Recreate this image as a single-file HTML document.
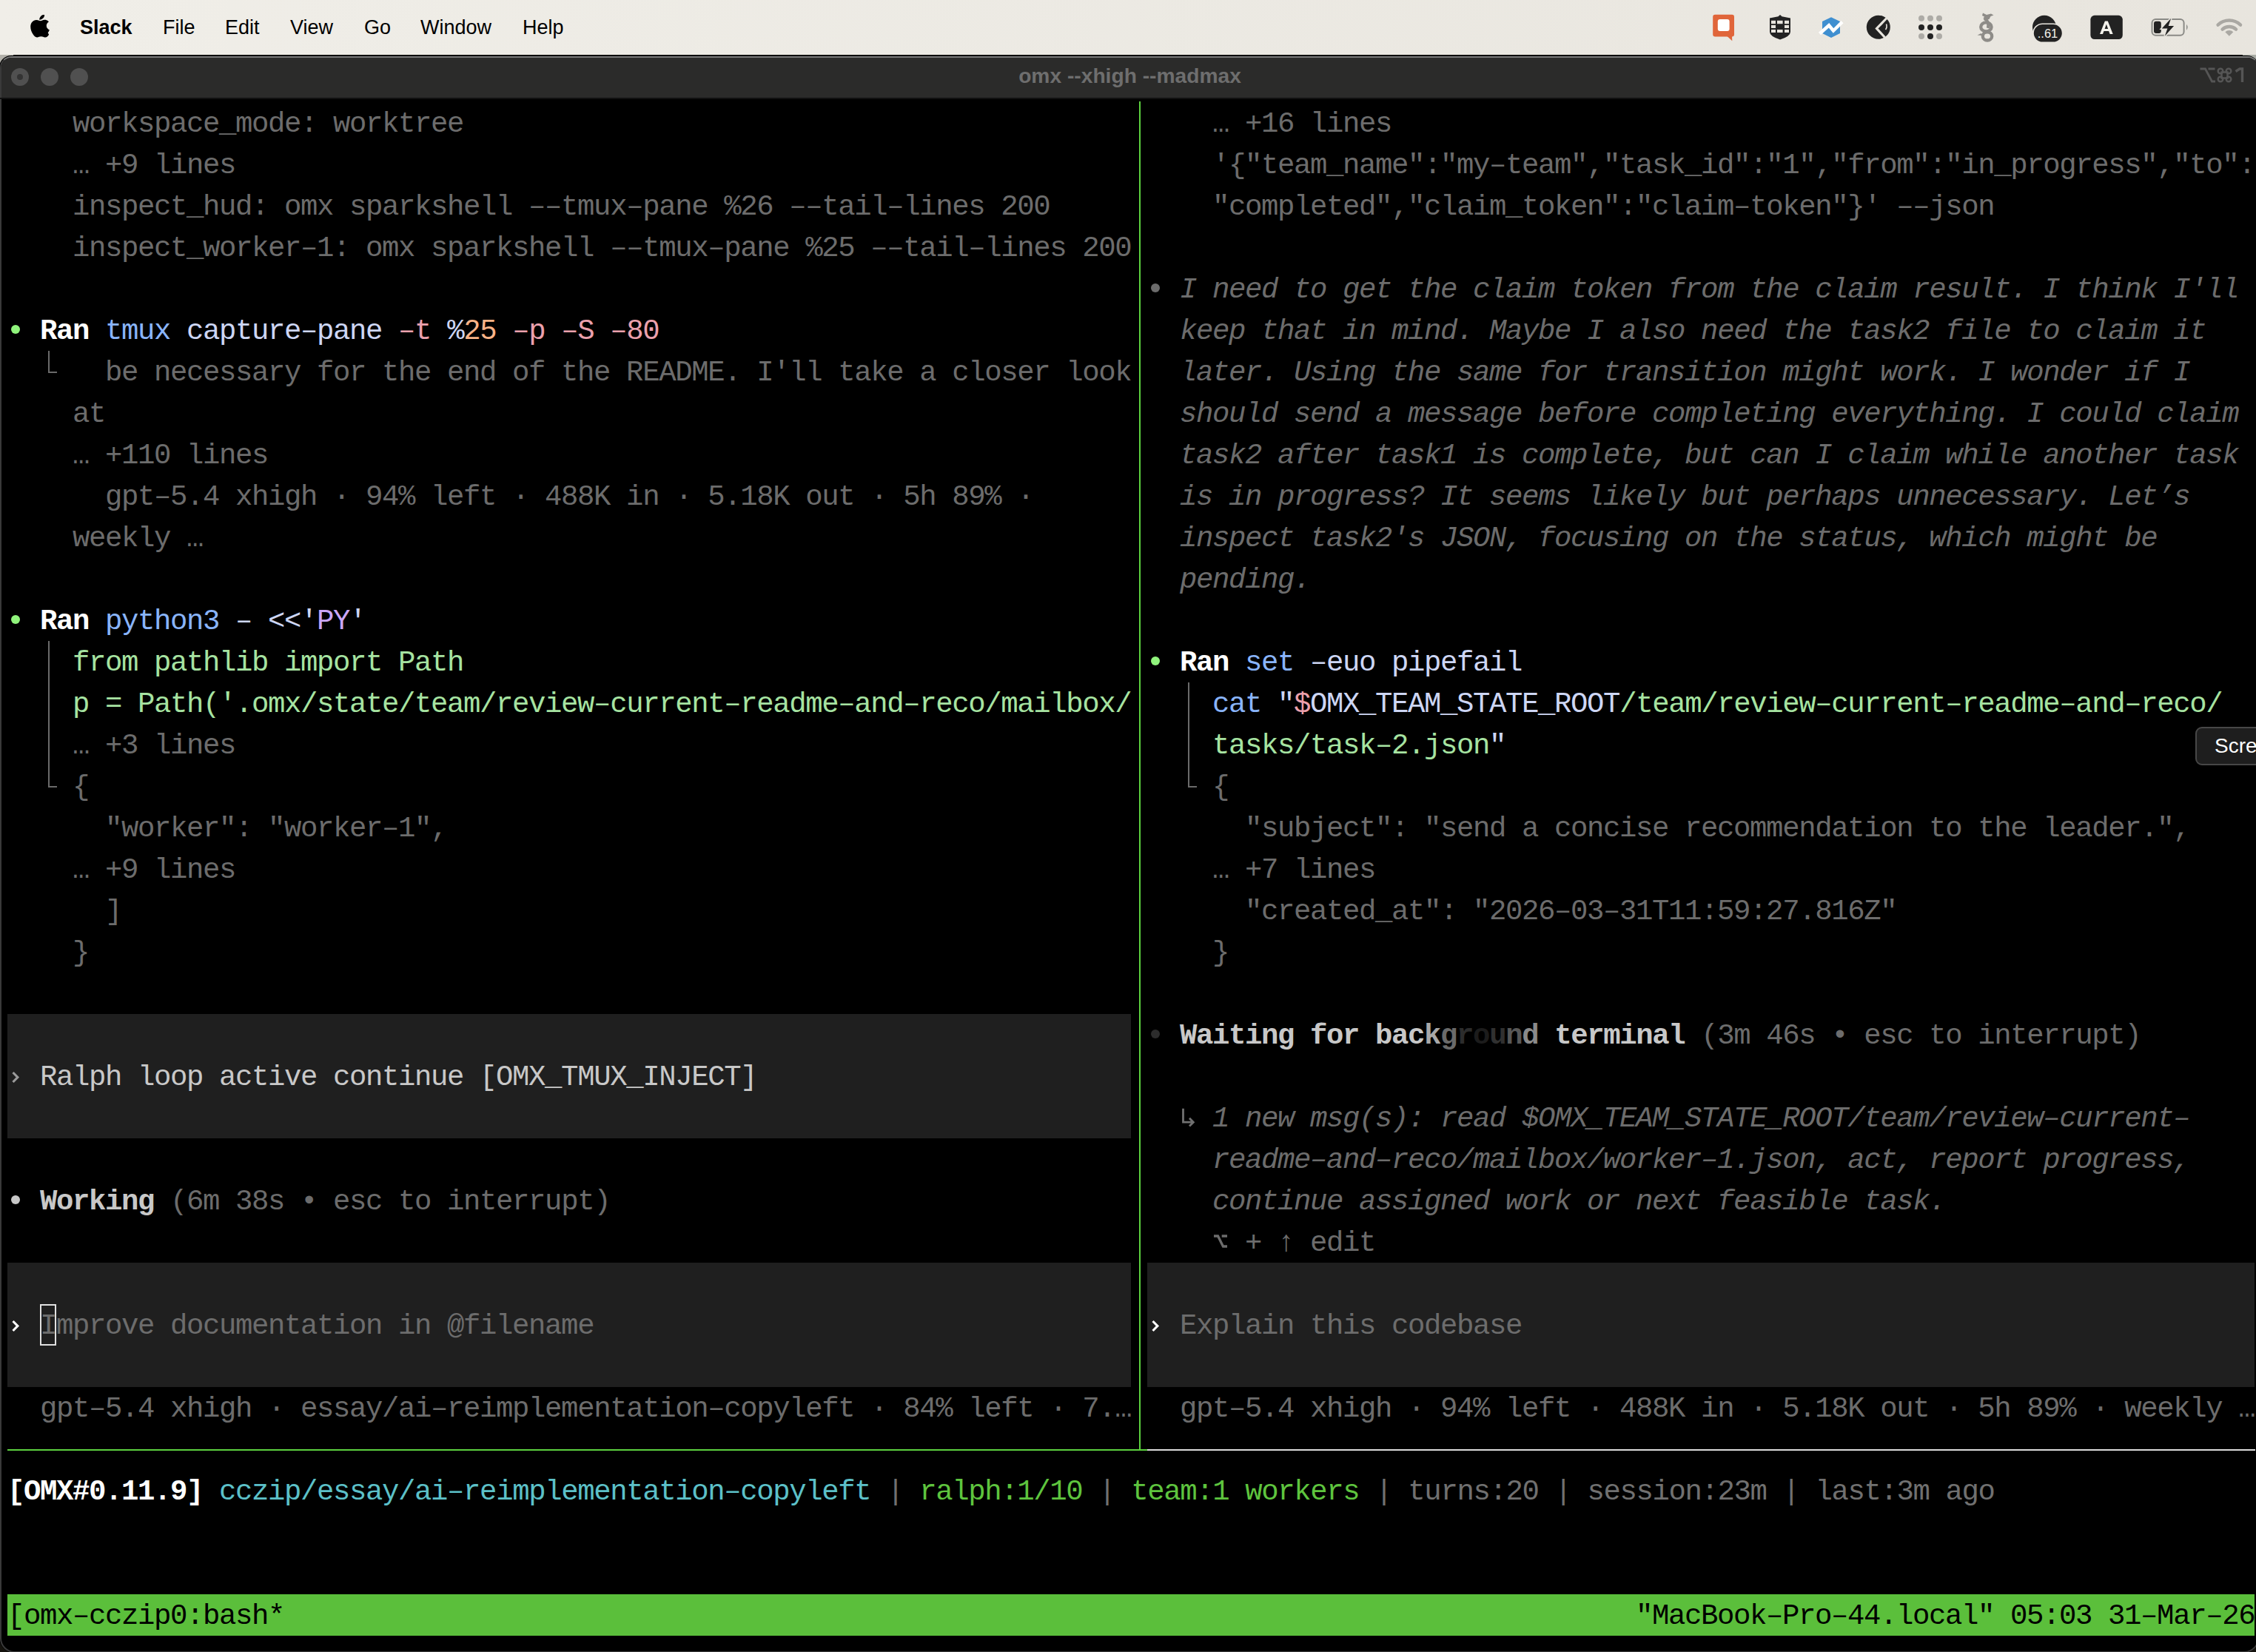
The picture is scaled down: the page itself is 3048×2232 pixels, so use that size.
<!DOCTYPE html>
<html><head><meta charset="utf-8">
<style>
html,body{margin:0;padding:0;}
body{width:3048px;height:2232px;overflow:hidden;position:relative;background:#ebe8e1;font-family:"Liberation Sans",sans-serif;}
#menubar{position:absolute;left:0;top:0;width:3048px;height:74px;background:linear-gradient(90deg,#f0eee8,#e8e5de);}
.mi{position:absolute;top:17px;font-size:27px;line-height:40px;color:#000;white-space:pre;}
body{background:#15130e !important;}
#win{position:absolute;left:-1px;top:75px;width:3053px;height:2158px;background:#000;border-radius:16px 16px 20px 20px;overflow:hidden;}
#frame{position:absolute;left:0.5px;top:0.5px;width:3052px;height:2157px;box-sizing:border-box;border:2px solid #3a3a3a;border-top:2px solid #7a7a7a;border-radius:15.5px 15.5px 19.5px 19.5px;background:#000;overflow:hidden;}
#title{position:absolute;left:0;top:0;width:100%;height:55px;background:#2b2b2a;}
#term{position:absolute;left:0;top:0;width:3048px;height:2232px;}
.ln{position:absolute;white-space:pre;font-family:"Liberation Mono",monospace;font-size:39px;letter-spacing:-1.40px;line-height:56px;height:56px;}
.bul{position:absolute;width:12px;height:12px;border-radius:50%;}
</style></head><body>
<div id="menubar">
  <svg style="position:absolute;left:41.3px;top:19.7px" width="28.4" height="31" viewBox="0 0 170 200" preserveAspectRatio="none"><path fill="#000" d="M150.4 172.1c-8.3 12.4-17.1 24.5-30.5 24.7-13.4.3-17.7-7.9-33-7.9-15.4 0-20.1 7.7-32.8 8.2-13.2.5-23.3-13.2-31.7-25.5C5.3 146.500-7.800 99.800 9.600 69.500c8.600-15 24-24.600 40.800-24.800 12.800-.2 24.900 8.600 32.700 8.600 7.900 0 20.200-10.700 34-9.100 5.800.2 22.100 2.300 32.600 17.700-.8.500-19.400 11.400-19.200 33.900.3 26.900 23.600 35.900 23.800 36-.2.600-3.700 12.800-12.400 25.300zM103.500 29.700c7.100-8.600 11.900-20.600 10.600-32.500-10.200.4-22.600 6.800-29.900 15.400-6.600 7.600-12.300 19.700-10.800 31.400 11.400.9 23-5.800 30.100-14.300z"/></svg>
  <div class="mi" style="left:108px;font-weight:bold">Slack</div>
  <div class="mi" style="left:220px">File</div>
  <div class="mi" style="left:304px">Edit</div>
  <div class="mi" style="left:392px">View</div>
  <div class="mi" style="left:492px">Go</div>
  <div class="mi" style="left:568px">Window</div>
  <div class="mi" style="left:706px">Help</div>
  <!-- status icons -->
  <svg style="position:absolute;left:2300px;top:0" width="748" height="74" viewBox="2300 0 748 74">
    <rect x="2314.2" y="19.8" width="28.8" height="29.6" rx="3" fill="#e0653a"/>
    <path d="M2333.5 49l6.8 6.2-0.3-6.2z" fill="#e0653a"/>
    <rect x="2320.8" y="26" width="15.8" height="16.1" rx="3" fill="#fff"/>
    <path d="M2405 20l2.5 2.2 11.5 2.2V43q0 6-14 10.6q-14-4.6-14-10.6V24.4l11.5-2.2z" fill="#232323"/>
    <g fill="#e8e5de"><rect x="2393" y="27.8" width="6" height="4.4"/><rect x="2401" y="27.8" width="7.6" height="4.4"/><rect x="2411" y="27.8" width="6" height="4.4"/><rect x="2393" y="34" width="6" height="4"/><rect x="2411" y="34" width="6" height="4"/><rect x="2393" y="40" width="6" height="4"/><rect x="2401" y="40" width="7.6" height="4"/><rect x="2411" y="40" width="6" height="4"/></g>
    <path d="M2474 23.2l12 5.8v16l-12 6-12-6V29z" fill="#3f8fd0"/>
    <path d="M2458.5 45.5l12.5-11.2 6 7.2 12-11.9" stroke="#fff" stroke-width="4.5" fill="none"/>
    <circle cx="2537.8" cy="36.7" r="16" fill="#222"/>
    <path d="M2549 24.5L2535.5 38.5l11 12" stroke="#e8e5de" stroke-width="3.2" fill="none"/>
    <path d="M2548.5 32.5q1.5 4-1 7.5" stroke="#e8e5de" stroke-width="1.6" fill="none"/>
    <g fill="#adaba6"><circle cx="2596" cy="24.8" r="4"/><circle cx="2608" cy="24.8" r="4"/><circle cx="2620" cy="24.8" r="4"/><circle cx="2596" cy="48.9" r="4"/><circle cx="2620" cy="48.9" r="4"/></g>
    <g fill="#222"><circle cx="2596" cy="36.9" r="4"/><circle cx="2608" cy="36.9" r="4"/><circle cx="2620" cy="36.9" r="4"/><circle cx="2608" cy="48.9" r="4"/></g>
    <g stroke="#8e8c88" stroke-width="4.3" fill="none"><ellipse cx="2683.4" cy="36.4" rx="7.2" ry="6"/><ellipse cx="2685" cy="48.9" rx="6.2" ry="5.6"/><path d="M2681 25q7 4 5 13"/></g>
    <path d="M2679 17.5l5 2.5 6-1.5 3.5 2-4 1.5-2 4-5 1-3-2 1.5-2.5-3-1.5z" fill="#8e8c88"/>
    <path d="M2671.5 47.5l5-2.5 1.5 3z" fill="#8e8c88"/>
    <circle cx="2762" cy="36.7" r="16" fill="#222"/>
    <rect x="2747" y="32.2" width="39.6" height="25.2" rx="12.6" fill="#222" stroke="#e8e5de" stroke-width="1.6"/>
    <text x="2766.5" y="51.2" font-family="Liberation Sans,sans-serif" font-size="16.5" fill="#f4f2ec" text-anchor="middle">..61</text>
    <rect x="2824.4" y="20.8" width="43.4" height="32.2" rx="5.5" fill="#222"/>
    <path d="M2837 46.1L2843.9 28.6h3.9l6.9 17.5h-4.1l-1.5-4h-6.6l-1.5 4zm6.6-7.1h4.5l-2.25-6.2z" fill="#f4f2ec"/>
    <rect x="2907.5" y="26" width="43.1" height="21.8" rx="5" stroke="#8a8a86" stroke-width="2" fill="none"/>
    <path d="M2954 32.7q3.2 4 0 8z" fill="#8a8a86"/>
    <rect x="2910" y="28.8" width="9.8" height="16.1" rx="3" fill="#222"/>
    <path d="M2933.2 24.8L2920.8 38.6h7.6l-3.6 10.2 12.3-13.8h-7.4z" fill="#222" stroke="#e8e5de" stroke-width="3" paint-order="stroke"/>
    <g stroke="#aaa8a3" stroke-width="4.5" fill="none" stroke-linecap="round"><path d="M2996.6 33.6A22.2 22.2 0 0 1 3027 33.6"/><path d="M3002.6 39.6A13.6 13.6 0 0 1 3021 39.6"/></g>
    <path d="M3011.8 48.8L3006.3 43.3A7.8 7.8 0 0 1 3017.3 43.3z" fill="#aaa8a3"/>
  </svg>
</div>
<div style="position:absolute;left:0;top:74px;width:18px;height:20px;background:#b3b1aa"></div>
<div style="position:absolute;left:3030px;top:74px;width:18px;height:20px;background:#a9aca5"></div>
<div id="win">
  <div id="frame">
  <div id="title">
    <div style="position:absolute;left:13.3px;top:14.5px;width:24px;height:24px;border-radius:50%;background:#505050"></div>
    <div style="position:absolute;left:21.3px;top:22.5px;width:8px;height:8px;border-radius:50%;background:#333"></div>
    <div style="position:absolute;left:53.3px;top:14.5px;width:24px;height:24px;border-radius:50%;background:#505050"></div>
    <div style="position:absolute;left:93.3px;top:14.5px;width:24px;height:24px;border-radius:50%;background:#505050"></div>
    <div style="position:absolute;left:1275px;top:6px;width:500px;text-align:center;font-weight:bold;font-size:28.2px;line-height:36px;color:#6e6e6e;white-space:pre">omx --xhigh --madmax</div>
    <svg style="position:absolute;left:2968px;top:12.5px" width="64" height="24" viewBox="0 0 64 24">
      <path d="M2.5 3h7l9 17h4.5M13.5 3h9" stroke="#555" stroke-width="2.8" fill="none"/>
      <g stroke="#555" stroke-width="2.5" fill="none"><rect x="31.5" y="7.5" width="8" height="8"/><circle cx="30" cy="6" r="3.3"/><circle cx="41" cy="6" r="3.3"/><circle cx="30" cy="17" r="3.3"/><circle cx="41" cy="17" r="3.3"/></g>
      <path d="M50.5 6.5L56 3h3.5v18" stroke="#555" stroke-width="3.4" fill="none"/>
    </svg>
  </div>
  </div>
  <div style="position:absolute;left:0;top:57px;width:100%;height:2px;background:#111"></div>
</div>
<div id="term">
<div style="position:absolute;left:10px;top:1370px;width:1518px;height:168px;background:#1f1f1f"></div>
<div style="position:absolute;left:10px;top:1706px;width:1518px;height:168px;background:#1f1f1f"></div>
<div style="position:absolute;left:1550px;top:1706px;width:1496px;height:168px;background:#1f1f1f"></div>
<div class="ln" style="left:98.0px;top:139.5px;"><span style="color:#6c6c6c">workspace_mode: worktree</span></div>
<div class="ln" style="left:98.0px;top:195.5px;"><span style="color:#6c6c6c">… +9 lines</span></div>
<div class="ln" style="left:98.0px;top:251.5px;"><span style="color:#6c6c6c">inspect_hud: omx sparkshell ––tmux–pane %26 ––tail–lines 200</span></div>
<div class="ln" style="left:98.0px;top:307.5px;"><span style="color:#6c6c6c">inspect_worker–1: omx sparkshell ––tmux–pane %25 ––tail–lines 200</span></div>
<div class="bul" style="left:15.0px;top:438.5px;background:#90f47c"></div>
<div class="ln" style="left:54.0px;top:419.5px;"><span style="color:#ffffff;font-weight:bold">Ran</span><span style="color:#cdd6f4"> </span><span style="color:#89b4fa">tmux</span><span style="color:#cdd6f4"> capture–pane </span><span style="color:#eba0ac">–t</span><span style="color:#cdd6f4"> %</span><span style="color:#fab387">25</span><span style="color:#cdd6f4"> </span><span style="color:#eba0ac">–p</span><span style="color:#cdd6f4"> </span><span style="color:#eba0ac">–S</span><span style="color:#cdd6f4"> </span><span style="color:#eba0ac">–80</span></div>
<div class="ln" style="left:142.0px;top:475.5px;"><span style="color:#6c6c6c">be necessary for the end of the README. I&#x27;ll take a closer look</span></div>
<div class="ln" style="left:98.0px;top:531.5px;"><span style="color:#6c6c6c">at</span></div>
<div class="ln" style="left:98.0px;top:587.5px;"><span style="color:#6c6c6c">… +110 lines</span></div>
<div class="ln" style="left:142.0px;top:643.5px;"><span style="color:#6c6c6c">gpt–5.4 xhigh · 94% left · 488K in · 5.18K out · 5h 89% ·</span></div>
<div class="ln" style="left:98.0px;top:699.5px;"><span style="color:#6c6c6c">weekly …</span></div>
<div class="bul" style="left:15.0px;top:830.5px;background:#90f47c"></div>
<div class="ln" style="left:54.0px;top:811.5px;"><span style="color:#ffffff;font-weight:bold">Ran</span><span style="color:#cdd6f4"> </span><span style="color:#89b4fa">python3</span><span style="color:#cdd6f4"> – &lt;&lt;&#x27;</span><span style="color:#cba6f7">PY</span><span style="color:#cdd6f4">&#x27;</span></div>
<div class="ln" style="left:98.0px;top:867.5px;"><span style="color:#a6e3a1">from pathlib import Path</span></div>
<div class="ln" style="left:98.0px;top:923.5px;"><span style="color:#a6e3a1">p = Path(&#x27;.omx/state/team/review–current–readme–and–reco/mailbox/</span></div>
<div class="ln" style="left:98.0px;top:979.5px;"><span style="color:#6c6c6c">… +3 lines</span></div>
<div class="ln" style="left:98.0px;top:1035.5px;"><span style="color:#6c6c6c">{</span></div>
<div class="ln" style="left:142.0px;top:1091.5px;"><span style="color:#6c6c6c">&quot;worker&quot;: &quot;worker–1&quot;,</span></div>
<div class="ln" style="left:98.0px;top:1147.5px;"><span style="color:#6c6c6c">… +9 lines</span></div>
<div class="ln" style="left:142.0px;top:1203.5px;"><span style="color:#6c6c6c">]</span></div>
<div class="ln" style="left:98.0px;top:1259.5px;"><span style="color:#6c6c6c">}</span></div>
<svg style="position:absolute;left:10px;top:1425px" width="22" height="56"><path d="M7.5 24L13.8 30.5L7.5 37" stroke="#9a9a9a" stroke-width="3.2" fill="none"/></svg>
<div class="ln" style="left:54.0px;top:1427.5px;"><span style="color:#c8c8c8">Ralph loop active continue [OMX_TMUX_INJECT]</span></div>
<div class="bul" style="left:15.0px;top:1614.5px;background:#c8c8c8"></div>
<div class="ln" style="left:54.0px;top:1595.5px;"><span style="color:#c8c8c8;font-weight:bold">Working</span><span style="color:#6c6c6c"> (6m 38s • esc to interrupt)</span></div>
<svg style="position:absolute;left:10px;top:1761px" width="22" height="56"><path d="M7.5 24L13.8 30.5L7.5 37" stroke="#ffffff" stroke-width="3.2" fill="none"/></svg>
<div style="position:absolute;left:54px;top:1762px;width:22px;height:56px;box-sizing:border-box;border:2.4px solid #e0e0e0"></div>
<div class="ln" style="left:54.0px;top:1763.5px;"><span style="color:#6c6c6c">Improve documentation in @filename</span></div>
<div class="ln" style="left:54.0px;top:1875.5px;"><span style="color:#6c6c6c">gpt–5.4 xhigh · essay/ai–reimplementation–copyleft · 84% left · 7.…</span></div>
<div style="position:absolute;left:65px;top:474px;width:2px;height:30px;background:#6a6a6a"></div>
<div style="position:absolute;left:65px;top:502px;width:12px;height:2px;background:#6a6a6a"></div>
<div style="position:absolute;left:65px;top:866px;width:2px;height:198px;background:#6a6a6a"></div>
<div style="position:absolute;left:65px;top:1062px;width:12px;height:2px;background:#6a6a6a"></div>
<div class="ln" style="left:1638.0px;top:139.5px;"><span style="color:#6c6c6c">… +16 lines</span></div>
<div class="ln" style="left:1638.0px;top:195.5px;"><span style="color:#6c6c6c">&#x27;{&quot;team_name&quot;:&quot;my–team&quot;,&quot;task_id&quot;:&quot;1&quot;,&quot;from&quot;:&quot;in_progress&quot;,&quot;to&quot;:</span></div>
<div class="ln" style="left:1638.0px;top:251.5px;"><span style="color:#6c6c6c">&quot;completed&quot;,&quot;claim_token&quot;:&quot;claim–token&quot;}&#x27; ––json</span></div>
<div class="bul" style="left:1555.0px;top:382.5px;background:#6c6c6c"></div>
<div class="ln" style="left:1594.0px;top:363.5px;"><span style="color:#6c6c6c;font-style:italic">I need to get the claim token from the claim result. I think I&#x27;ll</span></div>
<div class="ln" style="left:1594.0px;top:419.5px;"><span style="color:#6c6c6c;font-style:italic">keep that in mind. Maybe I also need the task2 file to claim it</span></div>
<div class="ln" style="left:1594.0px;top:475.5px;"><span style="color:#6c6c6c;font-style:italic">later. Using the same for transition might work. I wonder if I</span></div>
<div class="ln" style="left:1594.0px;top:531.5px;"><span style="color:#6c6c6c;font-style:italic">should send a message before completing everything. I could claim</span></div>
<div class="ln" style="left:1594.0px;top:587.5px;"><span style="color:#6c6c6c;font-style:italic">task2 after task1 is complete, but can I claim while another task</span></div>
<div class="ln" style="left:1594.0px;top:643.5px;"><span style="color:#6c6c6c;font-style:italic">is in progress? It seems likely but perhaps unnecessary. Let’s</span></div>
<div class="ln" style="left:1594.0px;top:699.5px;"><span style="color:#6c6c6c;font-style:italic">inspect task2&#x27;s JSON, focusing on the status, which might be</span></div>
<div class="ln" style="left:1594.0px;top:755.5px;"><span style="color:#6c6c6c;font-style:italic">pending.</span></div>
<div class="bul" style="left:1555.0px;top:886.5px;background:#90f47c"></div>
<div class="ln" style="left:1594.0px;top:867.5px;"><span style="color:#ffffff;font-weight:bold">Ran</span><span style="color:#cdd6f4"> </span><span style="color:#89b4fa">set</span><span style="color:#cdd6f4"> –euo pipefail</span></div>
<div class="ln" style="left:1638.0px;top:923.5px;"><span style="color:#89b4fa">cat</span><span style="color:#cdd6f4"> &quot;</span><span style="color:#eba0ac">$</span><span style="color:#cdd6f4">OMX_TEAM_STATE_ROOT</span><span style="color:#a6e3a1">/team/review–current–readme–and–reco/</span></div>
<div class="ln" style="left:1638.0px;top:979.5px;"><span style="color:#a6e3a1">tasks/task–2.json</span><span style="color:#cdd6f4">&quot;</span></div>
<div class="ln" style="left:1638.0px;top:1035.5px;"><span style="color:#6c6c6c">{</span></div>
<div class="ln" style="left:1682.0px;top:1091.5px;"><span style="color:#6c6c6c">&quot;subject&quot;: &quot;send a concise recommendation to the leader.&quot;,</span></div>
<div class="ln" style="left:1638.0px;top:1147.5px;"><span style="color:#6c6c6c">… +7 lines</span></div>
<div class="ln" style="left:1682.0px;top:1203.5px;"><span style="color:#6c6c6c">&quot;created_at&quot;: &quot;2026–03–31T11:59:27.816Z&quot;</span></div>
<div class="ln" style="left:1638.0px;top:1259.5px;"><span style="color:#6c6c6c">}</span></div>
<div style="position:absolute;left:1605px;top:922px;width:2px;height:142px;background:#6a6a6a"></div>
<div style="position:absolute;left:1605px;top:1062px;width:12px;height:2px;background:#6a6a6a"></div>
<div class="bul" style="left:1555.0px;top:1390.5px;background:#2c2c2c"></div>
<div class="ln" style="left:1594.0px;top:1371.5px;"><span style="color:#c8c8c8;font-weight:bold">Waiting for bac</span><span style="color:#a8a8a8;font-weight:bold">k</span><span style="color:#6a6a6a;font-weight:bold">g</span><span style="color:#2c2c2c;font-weight:bold">r</span><span style="color:#1c1c1c;font-weight:bold">o</span><span style="color:#303030;font-weight:bold">u</span><span style="color:#585858;font-weight:bold">n</span><span style="color:#8a8a8a;font-weight:bold">d</span><span style="color:#c8c8c8;font-weight:bold"> terminal</span><span style="color:#6c6c6c"> (3m 46s • esc to interrupt)</span></div>
<div class="ln" style="left:1638.0px;top:1483.5px;"><span style="color:#6c6c6c;font-style:italic">1 new msg(s): read $OMX_TEAM_STATE_ROOT/team/review–current–</span></div>
<div class="ln" style="left:1638.0px;top:1539.5px;"><span style="color:#6c6c6c;font-style:italic">readme–and–reco/mailbox/worker–1.json, act, report progress,</span></div>
<div class="ln" style="left:1638.0px;top:1595.5px;"><span style="color:#6c6c6c;font-style:italic">continue assigned work or next feasible task.</span></div>
<div class="ln" style="left:1682.0px;top:1651.5px;"><span style="color:#6c6c6c">+ ↑ edit</span></div>
<svg style="position:absolute;left:1638px;top:1649px" width="22" height="56"><path d="M2 21h5.5l7 14H20M12.7 21H20" stroke="#6c6c6c" stroke-width="3.3" fill="none"/></svg>
<svg style="position:absolute;left:1594px;top:1481px" width="22" height="56"><path d="M4.5 16.7V35.2H17.5M13 29.8l5.3 5.4-5.3 5.3" stroke="#707070" stroke-width="2.8" fill="none"/></svg>
<svg style="position:absolute;left:1550px;top:1761px" width="22" height="56"><path d="M7.5 24L13.8 30.5L7.5 37" stroke="#ffffff" stroke-width="3.2" fill="none"/></svg>
<div class="ln" style="left:1594.0px;top:1763.5px;"><span style="color:#6c6c6c">Explain this codebase</span></div>
<div class="ln" style="left:1594.0px;top:1875.5px;"><span style="color:#6c6c6c">gpt–5.4 xhigh · 94% left · 488K in · 5.18K out · 5h 89% · weekly …</span></div>
<div class="ln" style="left:10.0px;top:1987.5px;"><span style="color:#ffffff;font-weight:bold">[OMX#0.11.9]</span> <span style="color:#5cc0c8">cczip/essay/ai–reimplementation–copyleft</span><span style="color:#707070"> | </span><span style="color:#5ec43e">ralph:1/10</span><span style="color:#707070"> | </span><span style="color:#5ec43e">team:1 workers</span><span style="color:#707070"> | turns:20 | session:23m | last:3m ago</span></div>
<div style="position:absolute;left:10px;top:2154px;width:3036px;height:56px;background:#5bbf3b"></div>
<div class="ln" style="left:10.0px;top:2155.5px;"><span style="color:#000000">[omx–cczip0:bash*</span></div>
<div class="ln" style="left:2210.0px;top:2155.5px;"><span style="color:#000000">&quot;MacBook–Pro–44.local&quot; 05:03 31–Mar–26</span></div>
<div style="position:absolute;left:1539px;top:137px;width:2px;height:1823px;background:#5cd23f"></div>
<div style="position:absolute;left:10px;top:1958px;width:1540px;height:2px;background:#5cd23f"></div>
<div style="position:absolute;left:1550px;top:1958px;width:1497px;height:2px;background:#dcdcdc"></div>
<div style="position:absolute;left:2966px;top:982px;width:120px;height:52px;box-sizing:border-box;border:2px solid #474747;border-radius:9px;background:#1e1e1e"></div>
<div style="position:absolute;left:2992px;top:990px;font-family:'Liberation Sans',sans-serif;font-size:28px;line-height:36px;color:#fff;white-space:pre">Scre</div>
</div>
</body></html>
